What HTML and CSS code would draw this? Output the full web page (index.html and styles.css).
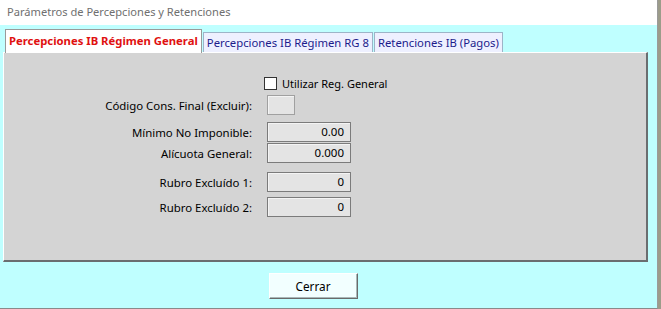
FILE: index.html
```html
<!DOCTYPE html>
<html>
<head>
<meta charset="utf-8">
<link rel="stylesheet" href="styles.css">
</head>
<body>
<div class="screen">
  <div class="window">
    <div class="titlebar">Parámetros de Percepciones y Retenciones</div>
    <div class="client">
      <div class="tabs">
        <div class="tab active">Percepciones IB Régimen General</div>
        <div class="tab">Percepciones IB Régimen RG 8</div>
        <div class="tab">Retenciones IB (Pagos)</div>
      </div>
      <div class="panel">
        <div class="form">
          <div class="row check-row">
            <span class="label"></span>
            <label class="check"><span class="box"></span>Utilizar Reg. General</label>
          </div>
          <div class="row r-codigo">
            <span class="label">Código Cons. Final (Excluir):</span>
            <span class="input small"></span>
          </div>
          <div class="row r-minimo">
            <span class="label">Mínimo No Imponible:</span>
            <span class="input">0.00</span>
          </div>
          <div class="row r-alic">
            <span class="label">Alícuota General:</span>
            <span class="input">0.000</span>
          </div>
          <div class="row r-rubro1">
            <span class="label">Rubro Excluído 1:</span>
            <span class="input">0</span>
          </div>
          <div class="row r-rubro2">
            <span class="label">Rubro Excluído 2:</span>
            <span class="input">0</span>
          </div>
        </div>
      </div>
      <div class="actions">
        <button class="btn">Cerrar</button>
      </div>
    </div>
  </div>
  <div class="desk"></div>
</div>
</body>
</html>
```

FILE: styles.css
```css
html, body {
  margin: 0;
  padding: 0;
  background: #bfffff;
}
body {
  font-family: "Noto Sans", "Open Sans", sans-serif;
  font-size: 11.4px;
  color: #000;
}
.screen {
  display: flex;
  width: 661px;
  height: 309px;
  overflow: hidden;
}
.window {
  width: 657px;
  height: 308px;
  border-right: 1px solid #9a9a9a;
  border-bottom: 1px solid #8a8a8a;
  display: flex;
  flex-direction: column;
  background: #bfffff;
}
.desk {
  width: 3px;
  background: #9c9c8a;
}
.titlebar {
  height: 25px;
  background: #fff;
  color: #6f6f6f;
  font-size: 11.1px;
  line-height: 24px;
  padding-left: 7px;
}
.client {
  flex: 1;
  display: flex;
  flex-direction: column;
  padding: 4px 9px 0 3px;
}
.tabs {
  display: flex;
  align-items: flex-end;
  padding-left: 2px;
  height: 24px;
  position: relative;
  z-index: 1;
}
.tab {
  height: 20px;
  line-height: 19px;
  padding: 0 3px;
  background: #eef0ff;
  border: 1px solid #9db4c8;
  border-bottom: none;
  color: #1c1c8c;
  margin-left: 1px;
  margin-bottom: 1px;
  box-sizing: border-box;
  font-size: 11.3px;
}
.tab.active {
  height: 24px;
  line-height: 22px;
  margin: 0;
  background: #fff;
  border: 1px solid #9a9a9a;
  border-bottom: none;
  color: #e01010;
  font-weight: bold;
  padding: 0 3px;
  font-size: 11.3px;
}
.panel {
  height: 210px;
  box-sizing: border-box;
  background: #d4d4d4;
  border-top: 1px solid #fff;
  border-left: 1px solid #fff;
  border-right: 2px solid #6a6e70;
  border-bottom: 2px solid #6a6e70;
  margin-top: -1px;
}
.form {
  display: flex;
  flex-direction: column;
  padding-top: 23px;
}
.row {
  display: grid;
  grid-template-columns: 248px auto;
  column-gap: 15px;
  align-items: center;
}
.label {
  text-align: right;
}
.check-row { height: 13px; column-gap: 12px; }
.check {
  display: flex;
  align-items: center;
  gap: 5px;
  white-space: nowrap;
  font-size: 11px;
}
.box {
  width: 11px;
  height: 11px;
  background: #fff;
  border: 1px solid #333;
}
.r-codigo { margin-top: 6px; }
.r-minimo { margin-top: 7px; }
.r-alic { margin-top: 1px; }
.r-rubro1 { margin-top: 9px; }
.r-rubro2 { margin-top: 5px; }
.input {
  width: 84px;
  height: 20px;
  box-sizing: border-box;
  background: #e4e4e4;
  border: 1px solid #7b7b7b;
  box-shadow: inset 1px 1px 0 #f4f4f4;
  text-align: right;
  padding-right: 6px;
  line-height: 18px;
  font-size: 11.5px;
}
.input.small {
  width: 28px;
  border-color: #a0a0a0;
}
.actions {
  display: flex;
  justify-content: center;
  padding-top: 11px;
  padding-right: 25px;
}
.btn {
  width: 89px;
  height: 26px;
  font-family: "Noto Sans", "Open Sans", sans-serif;
  font-size: 11.8px;
  background: #f2ffff;
  border: 1px solid;
  border-color: #fff #6a6a6a #6a6a6a #fff;
  box-shadow: inset -1px -1px 0 #a8b8b8;
  padding: 0;
  color: #000;
}
```
